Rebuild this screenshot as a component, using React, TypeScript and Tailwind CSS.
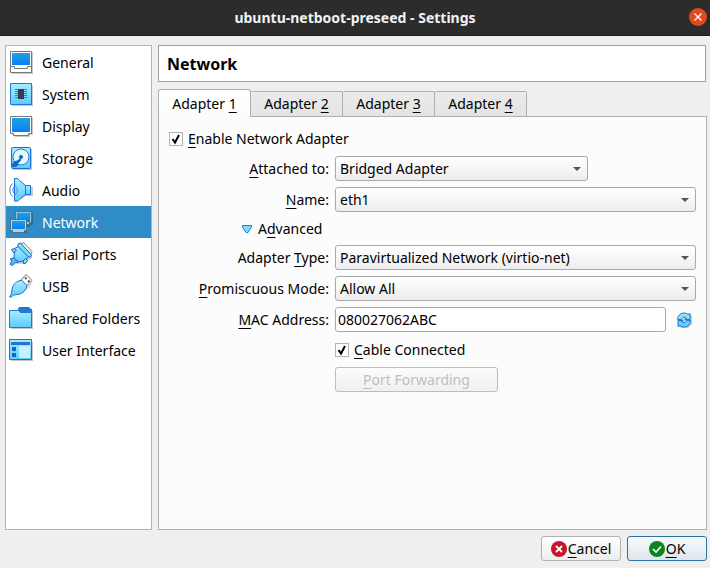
import React, { useState } from "react";

type IconProps = { children: React.ReactNode };

function Icon({ children }: IconProps) {
  return (
    <svg width="24" height="24" viewBox="0 0 24 24" className="shrink-0" aria-hidden="true">
      <defs>
        <linearGradient id="screen" x1="0" y1="0" x2="0" y2="1">
          <stop offset="0" stopColor="#1fa0e0" />
          <stop offset="1" stopColor="#0580f8" />
        </linearGradient>
        <linearGradient id="sky" x1="0" y1="0" x2="0" y2="1">
          <stop offset="0" stopColor="#a8ecff" />
          <stop offset="1" stopColor="#5ccbff" />
        </linearGradient>
      </defs>
      {children}
    </svg>
  );
}

const GeneralIcon = () => (
  <Icon>
    <path d="M3 2h21v22H3z" fill="#c9c9c9" />
    <path d="M1.500 1.500h21v21h-21z" fill="#fff" stroke="#777" />
    <path d="M3 3h18v12H3z" fill="url(#screen)" />
    <path d="M2 16.500h3.500v2h13v-2H22" fill="none" stroke="#777" />
  </Icon>
);

const SystemIcon = () => (
  <Icon>
    <path d="M3 3h21v21H3z" fill="#c9c9c9" />
    <path d="M1.500 1.500h21v21h-21z" fill="url(#sky)" stroke="#2378cf" />
    <path d="M6 7.500h12M6 9.500h12M6 11.500h12M6 13.500h12M6 15.500h12" stroke="#3c83a8" />
    <path d="M9 7h6v10H9z" fill="#343c47" />
  </Icon>
);

const DisplayIcon = () => (
  <Icon>
    <path d="M3 3h21v18h-3v2H6v-2H3z" fill="#c9c9c9" />
    <path d="M1.500 2.500h21v17h-3v2h-15v-2h-3z" fill="#fff" stroke="#777" />
    <path d="M3 4h18v14H3z" fill="url(#screen)" />
  </Icon>
);

const StorageIcon = () => (
  <Icon>
    <path d="M4 3h19v21H4z" fill="#c4c4c4" />
    <rect x="2.500" y="1.500" width="19" height="21" rx="1" fill="url(#sky)" stroke="#1a6fd0" />
    <circle cx="12" cy="11" r="8" fill="#e4f8ff" stroke="#2b80cf" />
    <circle cx="12" cy="11" r="2" fill="#145fb5" />
    <path d="M12 14l-3 3-1 3-4 1-1-2 2-3 3-1 3-2z" fill="#1268c8" stroke="#1268c8" strokeLinejoin="round" />
  </Icon>
);

const AudioIcon = () => (
  <Icon>
    <path d="M8 23l9-5h7V9h-4z" fill="#c8c8c8" />
    <path d="M16.500 7.500h5v9h-5z" fill="url(#sky)" stroke="#1a6fd0" />
    <path d="M5.500.5c2-.5 4 .5 5 2l6 5v9l-6 5c-1 1.500-3 2-5 1.500z" fill="url(#sky)" stroke="#1a6fd0" strokeLinejoin="round" />
    <path d="M6 7.500c3 2 3 7 0 9" fill="none" stroke="#3d93dc" />
    <path d="M3.500 5.500c-3.500 3-3.500 10 0 13M5 9c-1.500 1.500-1.500 4.500 0 6" fill="none" stroke="#267ed4" />
  </Icon>
);

const NetworkIcon = () => (
  <Icon>
    <path d="M8 3h16v12h-3v2h-3v6H4v-2h4z" fill="#246c9c" />
    <path d="M6.500 1.500h16v11h-2v2h-12v-2h-2z" fill="#8fc4e4" stroke="#5c6f7c" />
    <path d="M8 3h13v9H8z" fill="url(#screen)" />
    <path d="M1.500 9.500h16v11h-2v2h-12v-2h-2z" fill="#a9d4ec" stroke="#5c6f7c" />
    <path d="M3 11h13v8H3z" fill="url(#screen)" />
  </Icon>
);

const SerialIcon = () => (
  <Icon>
    <path d="M6 22h9l8-6v-3z" fill="#cfcfcf" />
    <path d="M11.500 2.500l3-2 8.500 9-2 3.500z" fill="#fff" stroke="#777" strokeLinejoin="round" />
    <path d="M5.500 6.500l4-2 10 10-3 4-7 1.500-4.500-3.500z" fill="url(#sky)" stroke="#1768c5" strokeLinejoin="round" />
    <path d="M5 16l4.500 4-4 1-2 2.500-2.500-1 1.500-3-1-3z" fill="#4dbcf8" stroke="#1768c5" strokeLinejoin="round" />
    <path d="M9.500 1.500l2-.5L22.500 13l-1 2h-2l-11-11z" fill="#7ddcff" stroke="#1768c5" strokeLinejoin="round" />
    <path d="M2.500 7.500l3-1 2 2-3 2zM14.500 18.500l2-2 2 2-2 3h-2z" fill="#7ddcff" stroke="#1768c5" strokeLinejoin="round" />
  </Icon>
);

const UsbIcon = () => (
  <Icon>
    <path d="M6 21l7-2 4-6 6-5-1 3-5 5-4 4z" fill="#d0d0d0" />
    <path d="M12 6l5-5.500 6 6-6 5.500z" fill="#fff" stroke="#777" strokeLinejoin="round" />
    <path d="M16 5l1.500-1.500M19 8l1.500-1.500" stroke="#555" strokeWidth="2" />
    <path d="M11 6.500h2l4.500 4.500v2c-1 4-5 7-9 7.500l-4 .5-2.500 2.500-1.500-1L2.500 20l.5-4c.5-5 4-8.500 8-9.500z" fill="url(#sky)" stroke="#1c70cf" strokeLinejoin="round" />
  </Icon>
);

const FolderIcon = () => (
  <Icon>
    <path d="M2 5h22v18H2z" fill="#c7c7c7" />
    <path d="M8 5l2-4h10l3 3v3H8z" fill="#2677d0" />
    <path d="M.5 4.500h9l2 2h11v15H.5z" fill="url(#sky)" stroke="#2677d0" />
    <path d="M9 3h14v3H11z" fill="#2677d0" />
  </Icon>
);

const InterfaceIcon = () => (
  <Icon>
    <path d="M2 4h22v19H2z" fill="#c7c7c7" />
    <path d="M.5 1.500h22v20H.5z" fill="url(#sky)" stroke="#1f72cb" />
    <path d="M2 4h19v3H2z" fill="#2374cd" />
    <path d="M3 9h4v4H3zM3 15h4v4H3z" fill="#1268c8" />
    <path d="M10 8h11v12H10z" fill="#c9f0ff" />
  </Icon>
);

const sections = [
  { name: "General", Art: GeneralIcon },
  { name: "System", Art: SystemIcon },
  { name: "Display", Art: DisplayIcon },
  { name: "Storage", Art: StorageIcon },
  { name: "Audio", Art: AudioIcon },
  { name: "Network", Art: NetworkIcon },
  { name: "Serial Ports", Art: SerialIcon },
  { name: "USB", Art: UsbIcon },
  { name: "Shared Folders", Art: FolderIcon },
  { name: "User Interface", Art: InterfaceIcon },
];

/** Text whose mnemonic letter (the one after "&") is underlined. */
function Mnemonic({ text }: { text: string }) {
  const at = text.indexOf("&");
  return (
    <span className="whitespace-pre">
      {text.slice(0, at)}
      <span className="underline decoration-1 underline-offset-3">{text[at + 1]}</span>
      {text.slice(at + 2)}
    </span>
  );
}

function FieldLabel({ id, text }: { id: string; text: string }) {
  return (
    <label htmlFor={id} className="text-right">
      <Mnemonic text={text} />
    </label>
  );
}

function Select({ id, options, className }: { id: string; options: string[]; className: string }) {
  return (
    <div className={`relative ${className}`}>
      <select
        id={id}
        className="block h-[25px] w-full appearance-none rounded-[3px] border border-[#a9a9a9] bg-linear-to-b from-white to-[#ededed] pr-6 pl-1 text-black"
      >
        {options.map((o) => (
          <option key={o}>{o}</option>
        ))}
      </select>
      <svg width="8" height="4" viewBox="0 0 8 4" className="pointer-events-none absolute top-[11px] right-[7px]" aria-hidden="true">
        <path d="M0 0h8L4 4z" fill="#555" />
      </svg>
    </div>
  );
}

function CheckBox({ text }: { text: string }) {
  const [on, setOn] = useState(true);
  return (
    <label className="flex w-fit items-center gap-[5px]">
      <span className="relative flex">
        <input
          type="checkbox"
          checked={on}
          onChange={() => setOn(!on)}
          className="size-[14px] appearance-none border border-[#b4b4b4] bg-white"
        />
        {on && (
          <svg width="14" height="14" viewBox="0 0 14 14" className="pointer-events-none absolute inset-0" aria-hidden="true">
            <path d="M3.500 7l2.500 3.500L10 3" fill="none" stroke="#000" strokeWidth="2" />
          </svg>
        )}
      </span>
      <Mnemonic text={text} />
    </label>
  );
}

export default function App() {
  const [tab, setTab] = useState(1);
  return (
    <div className="flex min-h-screen flex-col bg-[#efefef] font-['Noto_Sans',sans-serif] text-[14px] leading-[20px] text-black">
      <header className="grid h-9 grid-cols-[24px_1fr_24px] items-center border-b border-[#1d1d1d] bg-[#2c2c2c] text-[#f2f2f2]">
        <h1 className="col-start-2 text-center text-[14px] font-bold">ubuntu-netboot-preseed - Settings</h1>
        <button type="button" aria-label="Close" className="mb-[2px] ml-[3px] size-[18px] rounded-full bg-[#e4491b]">
          <svg width="18" height="18" viewBox="0 0 18 18" aria-hidden="true">
            <path d="M5.500 5.500l7 7m0-7l-7 7" stroke="#fff" strokeWidth="1.300" />
          </svg>
        </button>
      </header>

      <div className="flex flex-1 gap-[6px] pt-[9px] pr-[3px] pl-[5px]">
        <nav className="w-[147px] shrink-0 border border-[#b4b4b4] bg-white">
          {sections.map(({ name, Art }) => (
            <a
              key={name}
              href="#"
              aria-current={name === "Network" ? "page" : undefined}
              className={`flex h-8 items-center gap-[9px] pl-[3px] whitespace-nowrap ${name === "Network" ? "bg-[#308cc6] text-white" : ""}`}
            >
              <Art />
              <span className="pt-[2px]">{name}</span>
            </a>
          ))}
        </nav>

        <main className="flex min-w-0 flex-1 flex-col">
          <h2 className="mr-px flex h-[37px] items-center border border-[#a0a0a0] bg-white px-2 text-[16px] font-bold">Network</h2>

          <div role="tablist" className="relative z-10 mt-[7px] -mb-px flex h-7 items-end">
            {[1, 2, 3, 4].map((n) => (
              <button
                key={n}
                type="button"
                role="tab"
                aria-selected={tab === n}
                onClick={() => setTab(n)}
                className={
                  tab === n
                    ? "h-7 w-[93px] rounded-t-[3px] border border-b-0 border-[#b0b0b0] bg-linear-to-b from-white to-[#fcfcfc]"
                    : "h-[26px] w-[92px] rounded-t-[2px] border border-l-0 border-[#b0b0b0] bg-linear-to-b from-[#eaeaea] to-[#e4e4e4]"
                }
              >
                <Mnemonic text={`Adapter &${n}`} />
              </button>
            ))}
          </div>

          <section role="tabpanel" aria-label="Adapter" className="flex-1 border border-[#b0b0b0] bg-[#fcfcfc] px-[10px] pt-[10px] pb-4">
            <div className="flex h-[23px] items-center">
              <CheckBox text="&Enable Network Adapter" />
            </div>

            <div className="mt-[6px] grid grid-cols-[160px_1fr] items-center gap-[6px]">
              <FieldLabel id="attached" text="&Attached to:" />
              <Select id="attached" options={["Bridged Adapter", "NAT"]} className="w-[253px]" />

              <FieldLabel id="name" text="&Name:" />
              <Select id="name" options={["eth1"]} className="w-full" />

              <button type="button" aria-expanded="true" className="col-span-2 ml-[72px] flex h-[21px] w-fit items-center gap-[5px]">
                <svg width="12" height="10" viewBox="0 0 12 10" aria-hidden="true">
                  <path d="M1.500 1.500h9v1.500L7 8.500H5L1.500 3z" fill="#80dbff" stroke="#1c7be0" strokeLinejoin="round" />
                </svg>
                <Mnemonic text="A&dvanced" />
              </button>

              <FieldLabel id="type" text="Adapter &Type:" />
              <Select id="type" options={["Paravirtualized Network (virtio-net)"]} className="w-full" />

              <FieldLabel id="mode" text="&Promiscuous Mode:" />
              <Select id="mode" options={["Allow All", "Allow VMs", "Deny"]} className="w-full" />

              <FieldLabel id="mac" text="&MAC Address:" />
              <div className="flex items-center gap-[10px]">
                <input
                  id="mac"
                  type="text"
                  defaultValue="080027062ABC"
                  className="h-[25px] min-w-0 flex-1 rounded-[3px] border border-[#a9a9a9] bg-white px-[2px]"
                />
                <button type="button" aria-label="Generate a new MAC address" className="mr-1 size-4">
                  <svg width="16" height="16" viewBox="0 0 16 16" aria-hidden="true">
                    <path d="M4 3l4-1h6l2 2v8l-4 4H5l-3-2z" fill="#c8c8c8" />
                    <path d="M1.500 7.500c0-3 2-6 6-6.500 2 0 3.500.5 4.500 1.500l2-1v6H9l1.500-1.500C9.500 5 7 4.500 5.500 7.500z" fill="#8be2ff" stroke="#1a78d4" strokeLinejoin="round" />
                    <path d="M14.500 8.500c0 3-2 6-6 6.500-2 0-3.500-.5-4.500-1.500l-2 1v-6h5L5.500 10c1 1 3.500 1.500 5-1.500z" fill="#5fd2ff" stroke="#1a78d4" strokeLinejoin="round" />
                  </svg>
                </button>
              </div>

              <div className="col-start-2 flex h-[23px] items-center">
                <CheckBox text="&Cable Connected" />
              </div>

              <button
                type="button"
                disabled
                className="col-start-2 h-[25px] w-[163px] rounded-[3px] border border-[#bdbdbd] bg-linear-to-b from-[#fcfcfc] to-[#f0f0f0] text-[#bebebe]"
              >
                <Mnemonic text="&Port Forwarding" />
              </button>
            </div>
          </section>
        </main>
      </div>

      <footer className="flex justify-end gap-[6px] pt-[6px] pr-[3px] pb-[7px]">
        <button type="button" className="flex h-[25px] w-20 items-center justify-center gap-px rounded-[3px] border border-[#b0b0b0] bg-linear-to-b from-white to-[#ededed]">
          <svg width="16" height="16" viewBox="0 0 16 16" aria-hidden="true" className="shrink-0">
            <circle cx="8" cy="8" r="8" fill="#c7162b" />
            <path d="M5 5l6 6m0-6l-6 6" stroke="#fff" strokeWidth="1.800" />
          </svg>
          <Mnemonic text="&Cancel" />
        </button>
        <button type="button" className="flex h-[25px] w-20 items-center justify-center gap-px rounded-[3px] border border-[#2d74a4] bg-linear-to-b from-[#f8fbfd] to-[#dde6ec]">
          <svg width="16" height="16" viewBox="0 0 16 16" aria-hidden="true" className="shrink-0">
            <circle cx="8" cy="8" r="8" fill="#0e8420" />
            <path d="M4 8l3 3 5-5.500" fill="none" stroke="#fff" strokeWidth="1.600" />
          </svg>
          <Mnemonic text="&OK" />
        </button>
      </footer>
    </div>
  );
}
